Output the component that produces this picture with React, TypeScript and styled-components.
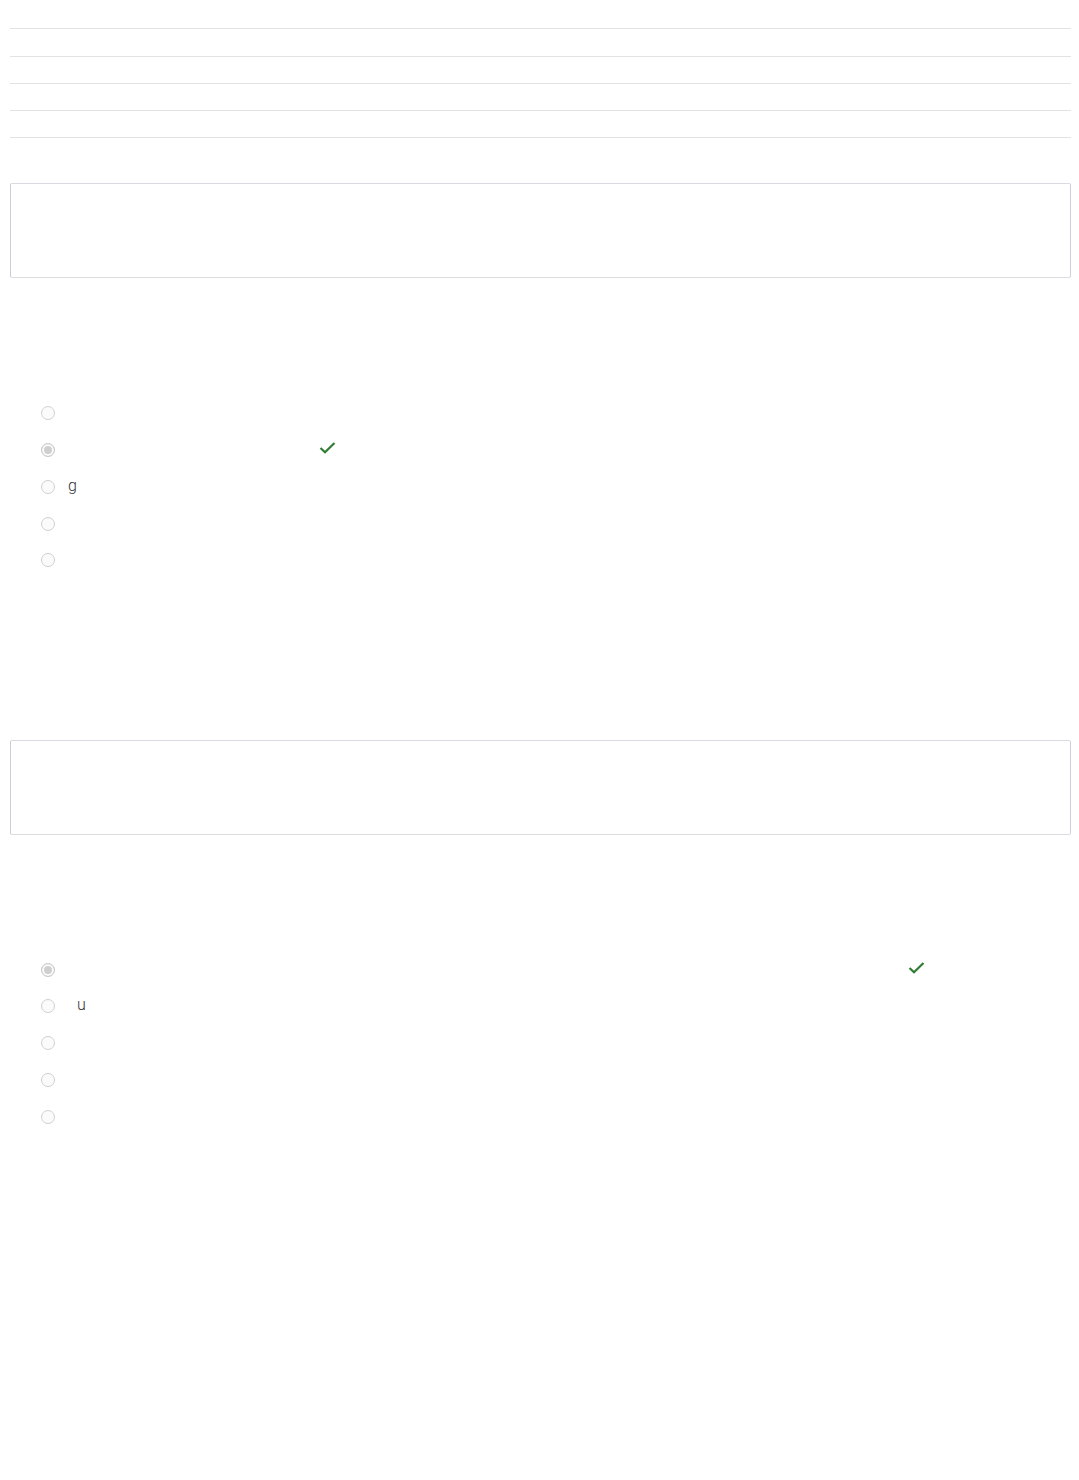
import React from "react";
import styled, { createGlobalStyle } from "styled-components";

const GlobalStyle = createGlobalStyle`
    html, body {
        margin: 0;
        padding: 0;
        background: #ffffff;
        font-family: Roboto, "Liberation Sans", sans-serif;
    }
`;

const Page = styled.div`
    padding: 2px 8px 0 10px;
    box-sizing: border-box;
    width: 1079px;
    min-height: 1480px;
`;

const RuledList = styled.div`
    display: flex;
    flex-direction: column;
`;

const RuledRow = styled.div`
    height: 26.3px;
    border-bottom: 1px solid #e2e2e2;
`;

const AnswerBox = styled.div<{ $top: number }>`
    margin-top: ${(p) => p.$top}px;
    height: 93px;
    border: 1px solid;
    border-color: #d9dbe0 #cdd1da #dcdde1 #c9cdd6;
    border-radius: 2px;
    background: #ffffff;
`;

const Options = styled.div`
    margin-top: 116.5px;
    padding-left: 30.5px;
    display: flex;
    flex-direction: column;
`;

const Option = styled.label`
    height: 36.75px;
    display: flex;
    align-items: center;
    font-size: 16px;
    font-weight: 300;
    color: #333333;
`;

const Radio = styled.input.attrs({ type: "radio", disabled: true })`
    appearance: none;
    margin: 0;
    width: 14px;
    height: 14px;
    border-radius: 50%;
    border: 1px solid #d0d0d0;
    background: #fbfbfb;
    box-sizing: border-box;
    flex-shrink: 0;

    &:checked {
        background: #cfcfcf;
        box-shadow: inset 0 0 0 2px #fbfbfb;
        border-color: #cacaca;
    }
`;

const OptionText = styled.span<{ $width?: number; $indent?: number }>`
    margin-left: 13.5px;
    padding-left: ${(p) => p.$indent ?? 0}px;
    width: ${(p) => (p.$width ? `${p.$width}px` : "auto")};
    line-height: 20px;
    position: relative;
    top: -1px;
`;

const CheckMark = styled.svg`
    width: 17px;
    height: 12px;
    margin-top: -4px;
    flex-shrink: 0;
`;

const Check = () => (
    <CheckMark viewBox="0 0 17 12">
        <polyline points="1.5,6 6,10.3 15.5,1" fill="none" stroke="#2e7d32" strokeWidth="2.2" />
    </CheckMark>
);

type Item = { text?: string; checked?: boolean; correct?: number; indent?: number };

const Question = ({ items, top, name }: { items: Item[]; top: number; name: string }) => (
    <>
        <AnswerBox $top={top} />
        <Options>
            {items.map((item, i) => (
                <Option key={i}>
                    <Radio defaultChecked={item.checked} name={name} />
                    <OptionText $width={item.correct} $indent={item.indent}>
                        {item.text}
                    </OptionText>
                    {item.correct ? <Check /> : null}
                </Option>
            ))}
        </Options>
    </>
);

const first: Item[] = [{}, { checked: true, correct: 251 }, { text: "g" }, {}, {}];
const second: Item[] = [{ checked: true, correct: 840 }, { text: "u", indent: 9 }, {}, {}, {}];

export default function App() {
    return (
        <Page>
            <GlobalStyle />
            <RuledList>
                {[0, 1, 2, 3, 4].map((i) => (
                    <RuledRow key={i} />
                ))}
            </RuledList>
            <Question items={first} top={45} name="q1" />
            <Question items={second} top={161} name="q2" />
        </Page>
    );
}
